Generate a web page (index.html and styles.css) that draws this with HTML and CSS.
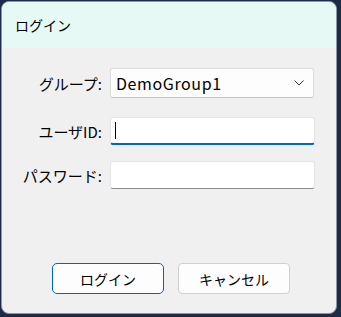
FILE: index.html
```html
<!DOCTYPE html>
<html lang="ja">
<head>
    <meta charset="UTF-8">
    <title>ログイン</title>
    <link rel="stylesheet" href="styles.css">
</head>
<body>
    <div class="window">
        <div class="titlebar">ログイン</div>
        <div class="content">
            <div class="row row-group">
                <label class="label">グループ:</label>
                <div class="combo">
                    <span class="combo-text">DemoGroup1</span>
                    <svg class="chevron" width="10" height="6" viewBox="0 0 10 6">
                        <path d="M0.5 0.5 L5 5 L9.5 0.5" fill="none" stroke="#333" stroke-width="1"/>
                    </svg>
                </div>
            </div>
            <div class="row row-user">
                <label class="label">ユーザID:</label>
                <div class="textbox focused"><span class="caret"></span></div>
            </div>
            <div class="row">
                <label class="label">パスワード:</label>
                <div class="textbox"></div>
            </div>
            <div class="buttons">
                <button class="btn default">ログイン</button>
                <button class="btn">キャンセル</button>
            </div>
        </div>
    </div>
</body>
</html>
```
FILE: styles.css
```css
body {
    margin: 0;
    width: 341px;
    height: 317px;
    background: #1e2b48;
    font-family: "Noto Sans CJK JP", "Noto Sans", sans-serif;
    color: #000;
    overflow: hidden;
}
.window {
    margin: 1px 0 0 1px;
    width: 334px;
    height: 311px;
    border: 1px solid #8f96a3;
    border-radius: 8px;
    background: #f0f0f0;
    overflow: hidden;
}
.titlebar {
    height: 46px;
    background: #e6f9f4;
    font-size: 14px;
    line-height: 46px;
    padding-left: 13px;
}
.content {
    padding-top: 20px;
}
.row {
    display: flex;
    align-items: center;
    height: 28px;
}
.row-group {
    height: 30px;
    margin-bottom: 19px;
}
.row-user {
    margin-bottom: 16px;
}
.label {
    width: 100px;
    text-align: right;
    font-size: 15px;
    margin-right: 8px;
}
.combo {
    box-sizing: border-box;
    width: 204px;
    height: 30px;
    background: #fdfdfd;
    border: 1px solid #dcdcdc;
    border-bottom-color: #c4c4c4;
    border-radius: 3px;
    display: flex;
    align-items: center;
    justify-content: space-between;
    padding: 0 9px 0 5px;
}
.combo-text {
    font-size: 16px;
    letter-spacing: 0.6px;
}
.textbox {
    box-sizing: border-box;
    width: 205px;
    height: 28px;
    background: #fff;
    border: 1px solid #e4e4e4;
    border-bottom: 1px solid #8a8a8a;
    border-radius: 3px;
    display: flex;
    align-items: center;
}
.textbox.focused {
    border-bottom: 2px solid #0067c0;
}
.caret {
    width: 1px;
    height: 17px;
    margin-left: 4px;
    background: #000;
}
.buttons {
    display: flex;
    gap: 14px;
    padding-left: 50px;
    margin-top: 74px;
}
.btn {
    box-sizing: border-box;
    width: 112px;
    height: 31px;
    font-family: inherit;
    font-size: 14px;
    background: #fdfdfd;
    border: 1px solid #d0d0d0;
    border-radius: 4px;
    color: #000;
}
.btn.default {
    border: 1.5px solid #0067c0;
    border-radius: 5px;
}
```
